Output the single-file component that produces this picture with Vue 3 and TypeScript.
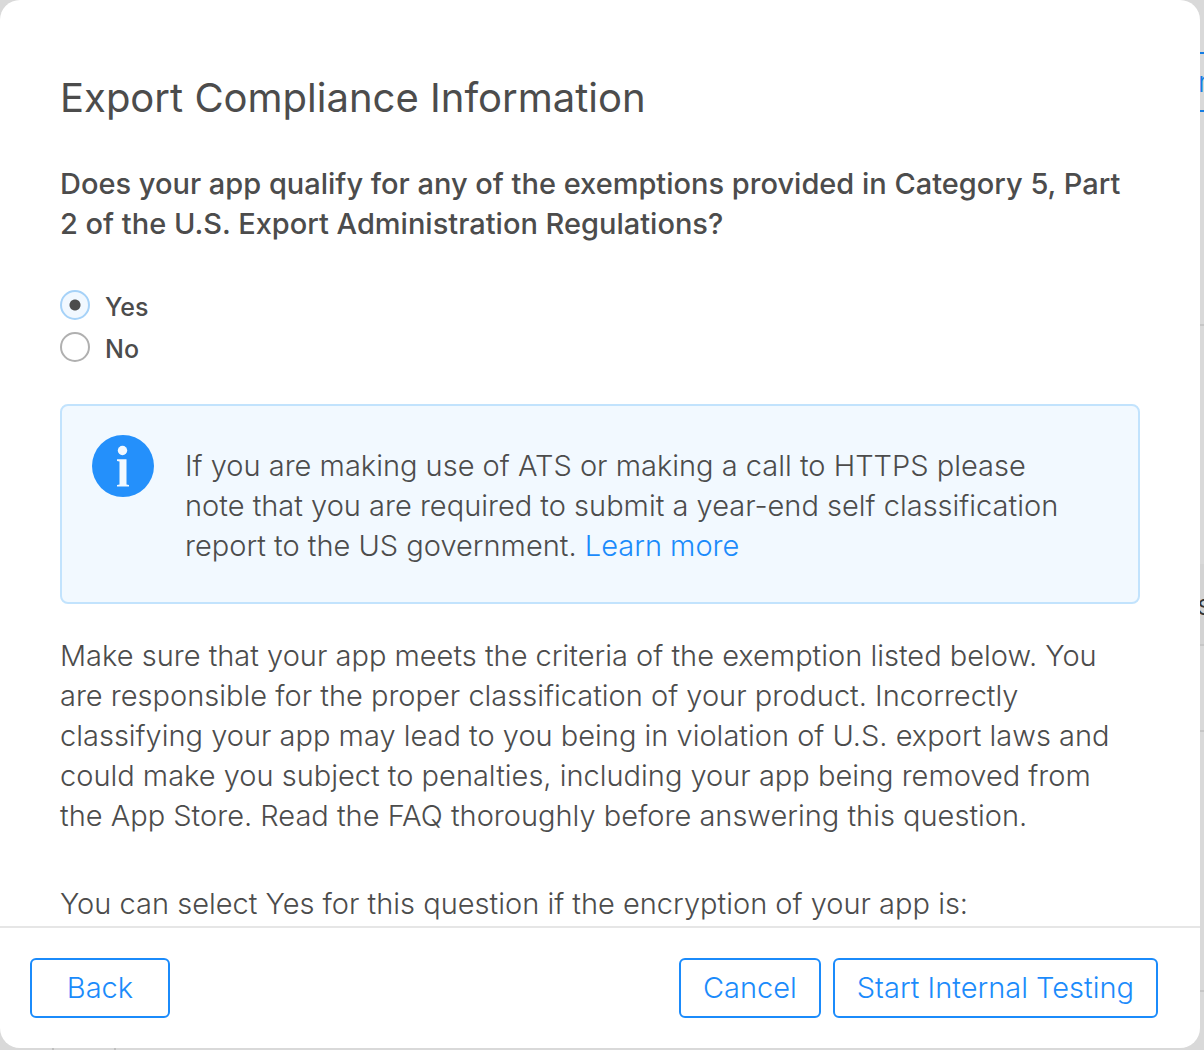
<script setup lang="ts">
import { ref } from 'vue'

const qualifies = ref<'yes' | 'no'>('yes')
</script>

<template>
  <div class="page">
    <main class="dialog" role="dialog" aria-labelledby="dialog-title">
      <div class="body">
        <h1 id="dialog-title">Export Compliance Information</h1>

        <fieldset class="question">
          <legend>
            Does your app qualify for any of the exemptions provided in Category 5, Part 2 of the U.S. Export
            Administration Regulations?
          </legend>
          <label class="option">
            <input v-model="qualifies" type="radio" name="exemption" value="yes" />
            <span>Yes</span>
          </label>
          <label class="option">
            <input v-model="qualifies" type="radio" name="exemption" value="no" />
            <span>No</span>
          </label>
        </fieldset>

        <section class="notice">
          <svg class="info" viewBox="0 0 62 62" aria-hidden="true">
            <circle cx="31" cy="31" r="31" fill="#2490fb" />
            <circle cx="30.500" cy="15.500" r="4.700" fill="#f2f9ff" />
            <path d="M25 24.300h9.500v25.200l2.500.5v1.500H25V50l2.500-.5V26.500L25 26z" fill="#f2f9ff" />
          </svg>
          <p>
            If you are making use of ATS or making a call to HTTPS please note that you are required to submit a
            year-end self classification report to the US government. <a href="#learn-more">Learn more</a>
          </p>
        </section>

        <p class="copy">
          Make sure that your app meets the criteria of the exemption listed below. You are responsible for the proper
          classification of your product. Incorrectly classifying your app may lead to you being in violation of U.S.
          export laws and could make you subject to penalties, including your app being removed from the App Store.
          Read the FAQ thoroughly before answering this question.
        </p>
        <p class="copy">You can select Yes for this question if the encryption of your app is:</p>
      </div>

      <footer class="actions">
        <button type="button" class="back">Back</button>
        <button type="button">Cancel</button>
        <button type="button">Start Internal Testing</button>
      </footer>
    </main>

    <!-- Dimmed page behind the dialog -->
    <aside class="behind" aria-hidden="true">
      <div class="behind-header"><div class="behind-action">r</div></div>
      <div class="behind-panel"></div>
      <div class="behind-heading">s</div>
      <div class="behind-row"></div>
      <div class="behind-rest"></div>
    </aside>
    <div class="behind-foot" aria-hidden="true"><i></i></div>
  </div>
</template>

<style>
body {
  margin: 0;
}
</style>

<style scoped>
* {
  box-sizing: border-box;
}

.page {
  display: grid;
  grid-template-columns: minmax(0, 1fr) 4px;
  grid-template-rows: minmax(0, 1fr) 2px;
  height: 100vh;
  overflow: hidden;
  background: #d9d9d9;
  color: #4c4c4c;
  font-family: Inter, "Liberation Sans", sans-serif;
  font-size: 29px;
  font-weight: 300;
  line-height: 40px;
}

.dialog {
  display: flex;
  flex-direction: column;
  min-height: 0;
  border-radius: 20px;
  background: #fff;
}

.body {
  flex: 1;
  min-height: 0;
  padding: 74px 60px 0;
  overflow: hidden;
}

h1 {
  margin: 0 0 42px;
  font-size: 40px;
  font-weight: 400;
  line-height: 48px;
}

.question {
  margin: 0 0 34px;
  padding: 0;
  border: 0;
}

legend {
  margin-bottom: 42px;
  padding: 0;
  font-weight: 500;
}

.option {
  display: flex;
  align-items: center;
  gap: 15px;
  height: 42px;
  font-size: 25px;
  font-weight: 500;
}

.option input {
  appearance: none;
  width: 30px;
  height: 30px;
  margin: 0 0 4px;
  border: 2px solid #b0b0b0;
  border-radius: 50%;
  background: #fff;
}

.option input:checked {
  border-color: #a6d2f8;
  background: radial-gradient(circle, #4c4c4c 5px, #f1f8ff 6px);
}

.notice {
  display: flex;
  gap: 31px;
  padding: 29px 60px 36px 30px;
  border: 2px solid #c2e3fd;
  border-radius: 8px;
  background: #f2f9ff;
}

.info {
  flex: none;
  width: 62px;
  height: 62px;
}

.notice p {
  margin: 11px 0 0;
}

a {
  color: #1b8bfb;
  text-decoration: none;
}

.copy {
  margin: 32px 0 48px;
}

.copy + .copy {
  margin: 0;
}

.actions {
  display: flex;
  gap: 12px;
  padding: 30px 42px 30px 30px;
  border-top: 2px solid #e6e6e6;
}

button {
  min-width: 140px;
  height: 60px;
  padding: 0 22px;
  border: 2px solid #1b8bfb;
  border-radius: 6px;
  background: #fff;
  color: #1b8bfb;
  font: inherit;
  white-space: nowrap;
}

.back {
  margin-right: auto;
}

.behind {
  display: flex;
  flex-direction: column;
  overflow: hidden;
}

.behind-header {
  flex: none;
  height: 326px;
  padding-top: 52px;
  border-bottom: 2px solid #c6c6c6;
}

.behind-action {
  height: 60px;
  border: solid #147de4;
  border-width: 2px 0;
  color: #147de4;
  line-height: 56px;
  text-indent: -2px;
}

.behind-panel {
  flex: none;
  height: 238px;
}

.behind-heading {
  flex: none;
  height: 82px;
  border-bottom: 2px solid #c6c6c6;
  background: #d3d3d3;
  color: #333;
  line-height: 82px;
  text-indent: -3px;
}

.behind-row {
  flex: none;
  height: 86px;
  border-bottom: 2px solid #c6c6c6;
}

.behind-rest {
  flex: none;
  height: 260px;
  border-bottom: 2px solid #c6c6c6;
}

.behind-foot {
  display: flex;
  grid-column: 1 / -1;
  padding-left: 52px;
}

.behind-foot i {
  width: 64px;
  border: solid #c0c0c0;
  border-width: 0 2px;
}
</style>
